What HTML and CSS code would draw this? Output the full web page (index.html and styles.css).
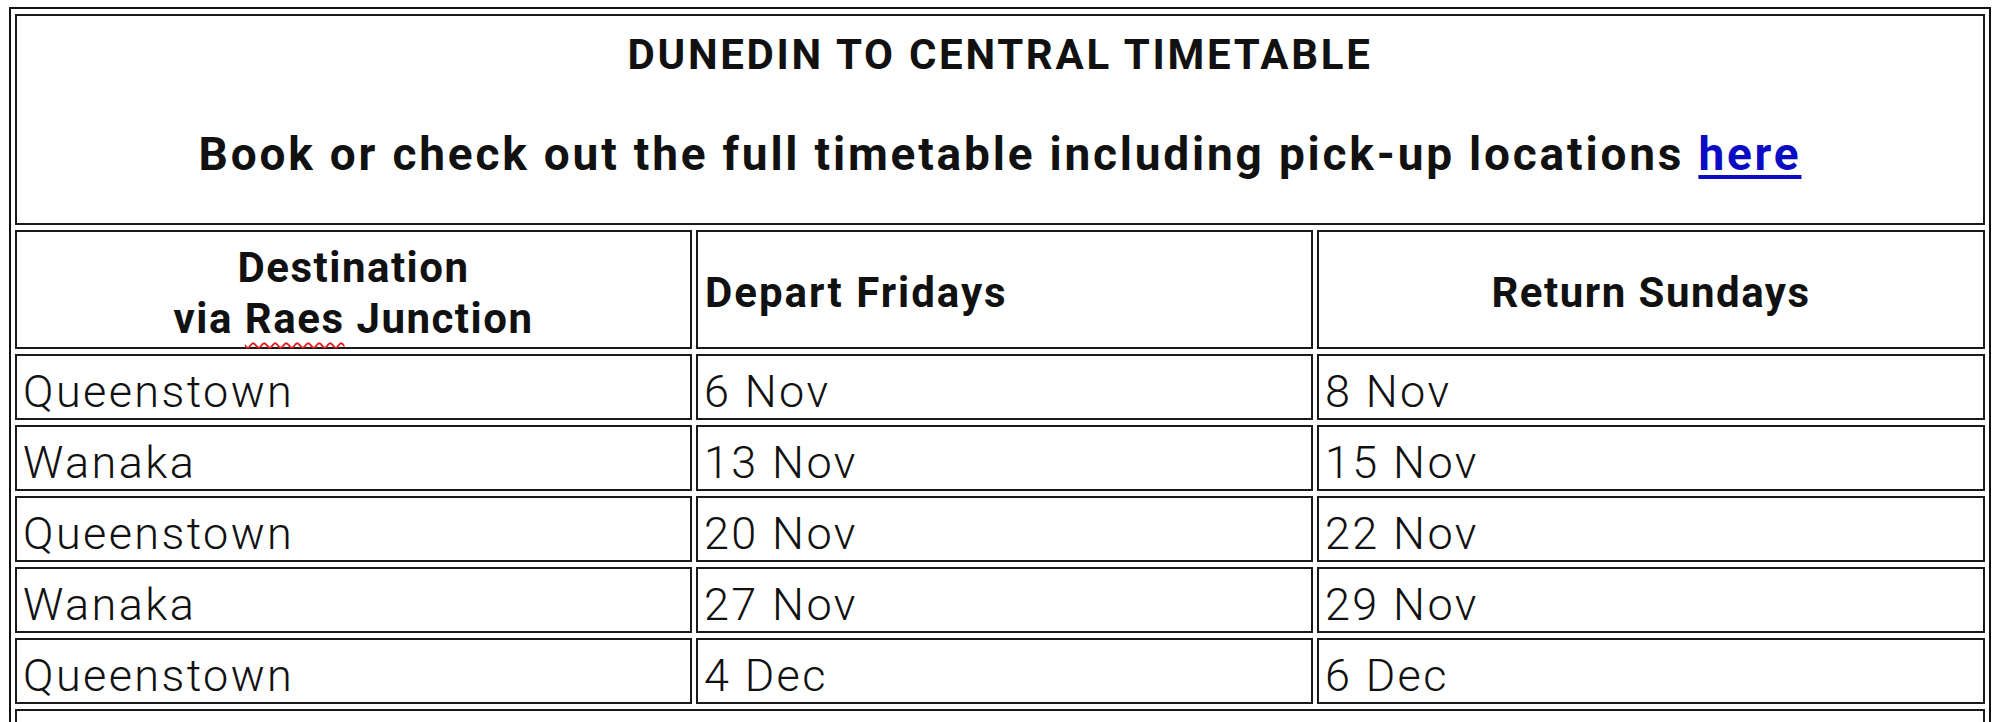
FILE: index.html
```html
<!DOCTYPE html>
<html lang="en">
<head>
<meta charset="utf-8">
<title>Dunedin to Central Timetable</title>
<link rel="stylesheet" href="styles.css">
</head>
<body>
<table class="timetable">
  <colgroup>
    <col class="c-dest">
    <col class="c-dep">
    <col class="c-ret">
  </colgroup>
  <tr>
    <td class="intro" colspan="3">
      <p class="title">DUNEDIN TO CENTRAL TIMETABLE</p>
      <p class="book">Book or check out the full timetable including pick-up locations <a href="#" class="link">here</a></p>
    </td>
  </tr>
  <tr class="head">
    <td class="th center">Destination<br>via <span class="spell">Raes</span> Junction</td>
    <td class="th">Depart Fridays</td>
    <td class="th center">Return Sundays</td>
  </tr>
  <tr class="row"><td>Queenstown</td><td>6 Nov</td><td>8 Nov</td></tr>
  <tr class="row"><td>Wanaka</td><td>13 Nov</td><td>15 Nov</td></tr>
  <tr class="row"><td>Queenstown</td><td>20 Nov</td><td>22 Nov</td></tr>
  <tr class="row"><td>Wanaka</td><td>27 Nov</td><td>29 Nov</td></tr>
  <tr class="row"><td>Queenstown</td><td>4 Dec</td><td>6 Dec</td></tr>
  <tr class="foot"><td colspan="3">&nbsp;</td></tr>
</table>
</body>
</html>
```

FILE: styles.css
```css
html, body {
  margin: 0;
  padding: 0;
  background: #ffffff;
}

body {
  padding: 7px 9px 0 9px;
  font-family: Roboto, "Liberation Sans", sans-serif;
  color: #111;
  overflow: hidden;
}

.timetable {
  width: 1982px;
  table-layout: fixed;
  border-collapse: separate;
  border-spacing: 4px 5px;
  border: 2px solid #111;
}

.c-dest { width: 677px; }
.c-dep { width: 617px; }
.c-ret { width: 668px; }

.timetable td {
  box-sizing: border-box;
  border: 2px solid #1a1a1a;
  padding: 0 4px;
}

.intro {
  height: 211px;
  vertical-align: top;
  text-align: center;
}

.title {
  margin: 14px 0 0 0;
  font-weight: 700;
  font-size: 42px;
  line-height: 50px;
  letter-spacing: 2.7px;
}

.book {
  margin: 47px 0 0 0;
  font-weight: 700;
  font-size: 46px;
  line-height: 54px;
  letter-spacing: 2.8px;
}

.link {
  color: #0b0bc4;
  text-decoration: underline;
  text-decoration-thickness: 4px;
  text-underline-offset: 5px;
}

.head td {
  height: 119px;
  vertical-align: middle;
  font-weight: 700;
  font-size: 42px;
  line-height: 51px;
  letter-spacing: 1.5px;
  padding-top: 6px;
}

.head td:nth-child(2) {
  letter-spacing: 2px;
  padding-left: 7px;
}

.head td.center {
  text-align: center;
}

.spell {
  text-decoration: underline wavy #e02020;
  text-decoration-thickness: 1.5px;
  text-underline-offset: 9px;
}

.row td {
  height: 66px;
  vertical-align: middle;
  font-weight: 300;
  font-size: 45px;
  line-height: 50px;
  letter-spacing: 2.4px;
  padding-top: 10px;
  padding-left: 6px;
}

.foot td {
  height: 60px;
}
```
